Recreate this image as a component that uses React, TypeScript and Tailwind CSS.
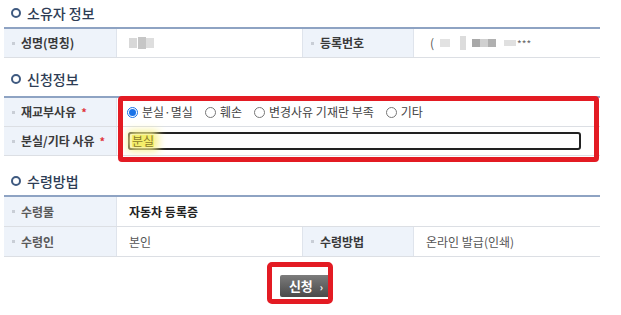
import React from "react";

const font = { fontFamily: '"Noto Sans CJK KR", "Noto Sans", sans-serif' };

function Title({ children }: { children: React.ReactNode }) {
  return (
    <div className="flex items-center gap-[6px] h-[26px] pl-[7px]">
      <span className="w-[10px] h-[10px] rounded-full border-[2.5px] border-[#3f5a80]" />
      <span className="text-[14px] text-[#2e3d55] font-medium leading-none">{children}</span>
    </div>
  );
}

function Label({ children, star, light }: { children: React.ReactNode; star?: boolean; light?: boolean }) {
  return (
    <div
      className={
        light
          ? "bg-[#eef3fa] flex items-center pl-[8px] border-r border-[#dfe4ec] text-[12px] font-bold text-[#5a5a5a]"
          : "bg-[#eef3fa] flex items-center pl-[8px] border-r border-[#dfe4ec] text-[12px] font-bold text-[#3a3a3a]"
      }
    >
      <span className="w-[3px] h-[3px] bg-[#c9ced6] mr-[6px]" />
      {children}
      {star && <span className="text-[#e0343c] ml-[5px] text-[11px]">*</span>}
    </div>
  );
}

function Radio({ checked, label }: { checked?: boolean; label: string }) {
  return (
    <span className="flex items-center gap-[4px] mr-[12px]">
      <span
        className={
          checked
            ? "w-[11px] h-[11px] rounded-full border border-[#1a73e8] flex items-center justify-center"
            : "w-[11px] h-[11px] rounded-full border border-[#767676] bg-white"
        }
      >
        {checked && <span className="w-[7px] h-[7px] rounded-full bg-[#1a73e8]" />}
      </span>
      <span className="text-[12px] text-[#444]">{label}</span>
    </span>
  );
}

export default function App() {
  return (
    <div style={font} className="relative w-[621px] h-[315px] bg-white overflow-hidden">
      <div className="w-[596px] ml-[4px]">
        <Title>소유자 정보</Title>
        <div className="grid grid-cols-[113px_186px_111px_186px] h-[31px] border-t-2 border-[#8ea3c3] border-b border-b-[#dcdfe4] mt-[1px]">
          <Label>성명(명칭)</Label>
          <div className="flex items-center pl-[12px] border-r border-[#dfe4ec]">
            <span className="w-[8px] h-[10px] bg-[#d8d8d8] mr-[1px]" />
            <span className="w-[8px] h-[12px] bg-[#c6c6c6]" />
            <span className="w-[8px] h-[10px] bg-[#dedede]" />
          </div>
          <Label>등록번호</Label>
          <div className="flex items-center pl-[16px] text-[12px] text-[#555]">
            <span>(</span>
            <span className="ml-[6px] w-[10px] h-[8px] bg-[#e2e2e2]" />
            <span className="ml-[10px] w-[6px] h-[14px] bg-[#dcdcdc]" />
            <span className="ml-[6px] w-[8px] h-[8px] bg-[#a8a8a8]" />
            <span className="w-[8px] h-[8px] bg-[#d0d0d0]" />
            <span className="w-[8px] h-[8px] bg-[#b0b0b0]" />
            <span className="ml-[8px] w-[12px] h-[6px] bg-[#e0e0e0]" />
            <span className="text-[10px] ml-[1px] text-[#666]">***</span>
          </div>
        </div>

        <div className="mt-[8px]">
          <Title>신청정보</Title>
        </div>
        <div className="border-t-2 border-[#8ea3c3] mt-[4px]">
          <div className="grid grid-cols-[113px_483px] h-[29px] border-b border-[#dcdfe4]">
            <Label star>재교부사유</Label>
            <div className="flex items-center pl-[10px]">
              <Radio checked label="분실·멸실" />
              <Radio label="훼손" />
              <Radio label="변경사유 기재란 부족" />
              <Radio label="기타" />
            </div>
          </div>
          <div className="grid grid-cols-[113px_483px] h-[29px] border-b border-[#dcdfe4]">
            <Label star>분실/기타 사유</Label>
            <div className="flex items-center pl-[11px]">
              <div className="w-[453px] h-[18px] border-2 border-[#222] rounded-[3px] flex items-center pl-[2px]">
                <span className="text-[12px] leading-none text-[#8a7a2a] bg-[#f4ee6a] shadow-[0_0_8px_4px_#f7f08a]">분실</span>
              </div>
            </div>
          </div>
        </div>

        <div className="mt-[12px]">
          <Title>수령방법</Title>
        </div>
        <div className="border-t-2 border-[#8ea3c3] mt-[1px]">
          <div className="grid grid-cols-[113px_483px] h-[30px] border-b border-[#dcdfe4]">
            <Label light>수령물</Label>
            <div className="flex items-center pl-[12px] text-[12px] font-bold text-[#222]">자동차 등록증</div>
          </div>
          <div className="grid grid-cols-[113px_186px_111px_186px] h-[30px] border-b border-[#dcdfe4]">
            <Label light>수령인</Label>
            <div className="flex items-center pl-[12px] text-[12px] text-[#555] border-r border-[#dfe4ec]">본인</div>
            <Label>수령방법</Label>
            <div className="flex items-center pl-[12px] text-[12px] text-[#555]">온라인 발급(인쇄)</div>
          </div>
        </div>

        <div className="flex justify-center mt-[18px] pl-[8px]">
          <button className="h-[22px] w-[52px] rounded-[2px] bg-gradient-to-b from-[#7c7c7c] to-[#4a4a4a] text-white text-[13px] font-bold flex items-center justify-center gap-[7px]">
            신청
            <span className="text-[10px]">›</span>
          </button>
        </div>
      </div>

      <div className="absolute left-[118px] top-[96px] w-[481px] h-[66px] border-[5px] border-[#e31b23] rounded-[4px]" />
      <div className="absolute left-[267px] top-[262px] w-[66px] h-[42px] border-[5px] border-[#e31b23] rounded-[5px]" />
    </div>
  );
}
